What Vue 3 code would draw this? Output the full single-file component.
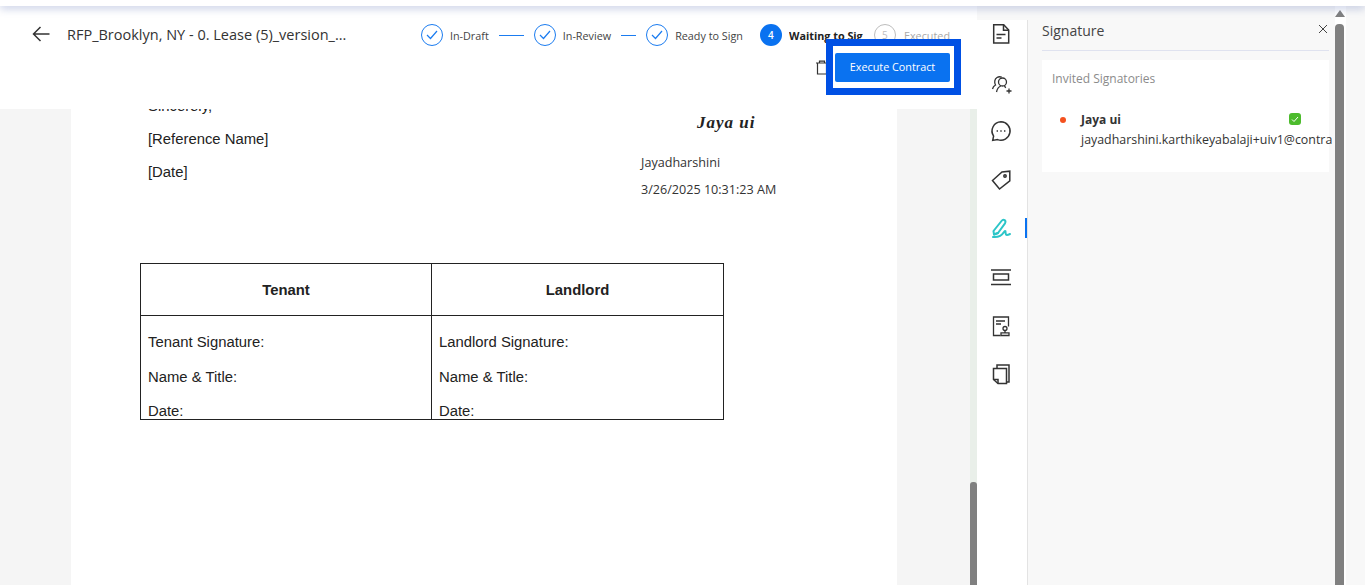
<script setup>
const steps = [
  { label: 'In-Draft', line: 25 },
  { label: 'In-Review', line: 15 },
  { label: 'Ready to Sign', line: 0 },
]
</script>

<template>
  <div class="page">
    <div class="strip"></div>
    <div class="body">
      <main class="main">
        <header class="head">
          <div class="row-top">
            <svg class="back" width="18" height="16" viewBox="0 0 18 16" fill="none" stroke="#333" stroke-width="1.5">
              <path d="M17.5 8H1.500M8.500 1 1.500 8l7 7" />
            </svg>
            <span class="title">RFP_Brooklyn, NY - 0. Lease (5)_version_...</span>
            <div class="stepper">
              <template v-for="s in steps" :key="s.label">
                <span class="circle done">
                  <svg width="12" height="10" viewBox="0 0 12 10" fill="none" stroke="#1b7cf0" stroke-width="1.2"><path d="M1 5l3.500 3.500L11 1" /></svg>
                </span>
                <span class="label">{{ s.label }}</span>
                <span v-if="s.line" class="line" :style="{ width: s.line + 'px' }"></span>
              </template>
              <span class="circle active">4</span>
              <span class="label bold">Waiting to Sign</span>
              <span class="circle todo">5</span>
              <span class="label muted">Executed</span>
            </div>
          </div>
          <div class="row-actions">
            <svg class="trash" width="14" height="15" viewBox="0 0 14 15" fill="none" stroke="#333" stroke-width="1.2">
              <path d="M1 3h12M4.500 3V1.200h5V3M2.500 3v11h9V3" />
            </svg>
            <div class="highlight">
              <button class="exec">Execute Contract</button>
            </div>
          </div>
        </header>
        <div class="viewer">
          <div class="doc">
            <div class="sign-block">
              <div class="sign-left">
                <p class="clip-line">Sincerely,</p>
                <p>[Reference Name]</p>
                <p>[Date]</p>
              </div>
              <div class="sign-right">
                <div class="script">Jaya ui</div>
                <div class="meta">Jayadharshini</div>
                <div class="meta">3/26/2025 10:31:23 AM</div>
              </div>
            </div>
            <div class="table">
              <div class="th">Tenant</div>
              <div class="th">Landlord</div>
              <div class="td">
                <p>Tenant Signature:</p>
                <p>Name &amp; Title:</p>
                <p>Date:</p>
              </div>
              <div class="td">
                <p>Landlord Signature:</p>
                <p>Name &amp; Title:</p>
                <p>Date:</p>
              </div>
            </div>
          </div>
          <div class="vbar"><div class="vthumb"></div></div>
        </div>
      </main>

      <aside class="rail">
        <svg class="ic" viewBox="0 0 24 24" fill="none" stroke="#333" stroke-width="1.5">
          <path d="M4.700 2.800h10l5 5.200v13H4.700z" /><path d="M14.500 2.800v5.400h5.200" /><path d="M7.500 12.500h9M7.500 16h5" />
        </svg>
        <svg class="ic" viewBox="0 0 24 24" fill="none" stroke="#333" stroke-width="1.3">
          <circle cx="13.500" cy="11" r="4" />
          <path d="M7.500 21c.6-3 2.300-5.300 4.300-6M15.500 14.800l1.200 2" />
          <path d="M3.500 18c.5-2.200 1.700-3.300 3-4-1.400-2.600-1-6 1.500-7.500 1.500-.9 3.300-.9 4.700-.3" />
          <path d="M17.500 20h5M20 17.500v5" />
        </svg>
        <svg class="ic" viewBox="0 0 24 24" fill="none" stroke="#333" stroke-width="1.5">
          <path d="M12 2.800a9.200 9.200 0 1 1-3.400 17.800l-4.900.8.900-4.300A9.200 9.200 0 0 1 12 2.800z" />
          <path d="M7.600 12h1.400M11.300 12h1.400M15 12h1.400" stroke-width="1.6" />
        </svg>
        <svg class="ic" viewBox="0 0 24 24" fill="none" stroke="#333" stroke-width="1.5">
          <path d="M3.500 12.500 13 4l7.800-.8v9.600L10.500 21z" /><circle cx="16" cy="8" r="1.200" />
        </svg>
        <svg class="ic" viewBox="0 0 24 24" fill="none" stroke="#2cc5c8" stroke-width="2" stroke-linecap="round" stroke-linejoin="round">
          <path d="M5 18.500 4.500 15 12.500 5c2-2.500 5-.4 3.500 2.300L9 17z" />
          <path d="M5 18.500l4-1.500M4 21c4.500.5 8.500-1 11-5 .8-1.200 1.500-1.500 1.500-.2 0 1.500 0 3.200 1.500 3.200 1 0 2-.5 3-1" />
        </svg>
        <svg class="ic" viewBox="0 0 24 24" fill="none" stroke="#333" stroke-width="1.5">
          <path d="M2 5h20M2 19.500h20" /><rect x="4.500" y="9" width="15" height="6" />
        </svg>
        <svg class="ic" viewBox="0 0 24 24" fill="none" stroke="#333" stroke-width="1.3">
          <path d="M11.500 21.500H4.500V3h15v9.500" /><path d="M7 7h9M7 10h5" />
          <circle cx="16" cy="14.500" r="2" /><path d="M16 16.500v2M12 18.800h8v2.700h-8z" />
        </svg>
        <svg class="ic" viewBox="0 0 24 24" fill="none" stroke="#333" stroke-width="1.5">
          <path d="M8 6V3h12v17h-2.500" />
          <path d="M4.500 6.500h13V21.500H9L4.500 17.500z" /><path d="M4.800 17.500H9V21.200" />
        </svg>
        <span class="rail-mark"></span>
      </aside>

      <section class="panel">
        <div class="panel-inner">
          <div class="panel-head">
            <span class="panel-title">Signature</span>
            <svg class="close" width="10" height="10" viewBox="0 0 10 10" stroke="#444" stroke-width="1"><path d="M1 1l8 8M9 1 1 9" /></svg>
          </div>
          <div class="card">
            <div class="card-title">Invited Signatories</div>
            <div class="person">
              <span class="dot"></span>
              <div class="who">
                <div class="name-row">
                  <span class="name">Jaya ui</span>
                  <span class="ok">
                    <svg width="8" height="7" viewBox="0 0 8 7" fill="none" stroke="#fff" stroke-width="1"><path d="M1 3.500 3 5.500 7 1" /></svg>
                  </span>
                </div>
                <div class="email">jayadharshini.karthikeyabalaji+uiv1@contractpodai.com</div>
              </div>
            </div>
          </div>
        </div>
        <div class="pbar">
          <span class="tri"></span>
          <span class="pthumb"></span>
        </div>
      </section>
    </div>
  </div>
</template>

<style scoped>
.page { width: 1365px; height: 585px; overflow: hidden; display: flex; flex-direction: column; background: #f8f8f8; font-family: "Open Sans", sans-serif; color: #333; }
.strip { height: 6px; background: #fff; position: relative; z-index: 3; box-shadow: 0 2px 9px rgba(70, 95, 170, .38); flex: none; }
.body { flex: 1; display: flex; min-height: 0; }
.main { width: 977px; display: flex; flex-direction: column; flex: none; }
.head { height: 103px; background: #fff; padding: 18px 16px 0 32px; box-sizing: border-box; flex: none; }
.row-top { display: flex; align-items: center; height: 22px; }
.back { flex: none; margin-bottom: 2px; }
.title { margin-left: 17px; margin-bottom: 2px; font-size: 14.5px; color: #333; white-space: nowrap; }
.stepper { margin-left: auto; margin-right: 11px; display: flex; align-items: center; height: 22px; }
.circle { width: 22px; height: 22px; border-radius: 50%; box-sizing: border-box; display: flex; align-items: center; justify-content: center; flex: none; font-size: 10px; }
.done { border: 1px solid #1b7cf0; }
.active { background: #0a72f0; color: #fff; font-weight: 600; margin-left: 17px; }
.todo { border: 1px solid #bdbdbd; color: #bdbdbd; margin-left: 11px; }
.label { margin-left: 7px; font-size: 10.8px; color: #444; white-space: nowrap; }
.label.bold { font-weight: 700; color: #222; width: 74px; overflow: hidden; flex: none; }
.label.muted { color: #aaa; margin-left: 8px; }
.line { height: 1px; background: #1b7cf0; margin: 0 10px; flex: none; }
.row-actions { display: flex; justify-content: flex-end; align-items: center; margin-top: -7px; }
.trash { margin-right: -3px; flex: none; }
.highlight { position: relative; border: 7px solid #0050e4; padding: 7px 4px 6px 2px; background: #fff; display: flex; }
.exec { width: 115px; height: 29px; border: 0; border-radius: 2px; background: #0a72f0; color: #fff; font: 10.8px "Open Sans", sans-serif; padding: 0 0 2px; }
.viewer { flex: 1; min-height: 0; display: flex; background: #f5f5f5; padding-left: 71px; }
.doc { width: 826px; background: #fff; overflow: hidden; flex: none; font-family: "Liberation Sans", sans-serif; font-size: 14.85px; color: #222; }
.doc p { margin: 0; }
.sign-block { display: flex; padding-left: 77px; height: 154px; }
.sign-left { width: 493px; margin-top: -19px; }
.sign-left p { height: 33px; line-height: 33px; }
.sign-right { font-family: "Open Sans", sans-serif; font-size: 12.6px; color: #333; }
.script { font: italic 700 17px "Liberation Serif", serif; margin: 2px 0 0 56px; height: 42px; line-height: 24px; letter-spacing: 1px; color: #222; white-space: nowrap; }
.meta { height: 27px; line-height: 20px; white-space: nowrap; }
.table { margin-left: 69px; width: 584px; height: 157px; box-sizing: border-box; border: 1px solid #222; display: grid; grid-template-columns: 291px 1fr; grid-template-rows: 52px 1fr; overflow: hidden; }
.th { font-weight: 700; display: flex; align-items: center; justify-content: center; border-bottom: 1px solid #222; }
.th:first-child, .td:nth-child(3) { border-right: 1px solid #222; }
.td { padding: 16px 7px 0; overflow: hidden; }
.td p { height: 34.5px; line-height: 20px; }
.vbar { width: 7px; margin-left: 73px; background: #e9efe9; display: flex; align-items: flex-end; flex: none; }
.vthumb { width: 7px; height: 103px; background: #808080; border-radius: 3px 3px 0 0; }
.rail { width: 51px; margin-top: 14px; background: #fff; border-right: 1px solid #e3e3e3; box-sizing: border-box; display: flex; flex-direction: column; align-items: center; gap: 24.6px; padding: 2px 2px 0 0; position: relative; flex: none; }
.ic { width: 24px; height: 24px; flex: none; }
.rail-mark { position: absolute; right: 0; top: 198px; width: 2px; height: 20px; background: #0a72f0; }
.panel { flex: 1; min-width: 0; display: flex; }
.panel-inner { width: 304px; padding-left: 14px; overflow: hidden; box-sizing: border-box; flex: none; }
.panel-head { width: 287px; height: 31px; margin-top: 14px; display: flex; align-items: center; justify-content: space-between; border-bottom: 1px solid #dfe2ef; padding-right: 1px; box-sizing: border-box; }
.panel-title { font-size: 14px; color: #444; position: relative; top: -5px; }
.close { position: relative; top: -6px; }
.card { width: 287px; height: 112px; margin-top: 9px; background: #fff; box-sizing: border-box; padding: 10px 0 0 10px; }
.card-title { font-size: 12px; color: #8b8b8b; }
.person { display: flex; margin-top: 23px; padding-left: 8px; }
.dot { width: 6px; height: 6px; margin-top: 7px; border-radius: 50%; background: #f4511e; flex: none; }
.who { margin-left: 15px; }
.name-row { display: flex; align-items: center; height: 18px; }
.name { font-size: 12px; font-weight: 700; color: #333; }
.ok { margin-left: 168px; width: 12px; height: 12px; border-radius: 3px; background: #4cbb2c; display: flex; align-items: center; justify-content: center; }
.email { font-size: 12.4px; color: #333; white-space: nowrap; margin-top: 3px; line-height: 18px; }
.pbar { width: 11px; background: #fff; flex: none; display: flex; flex-direction: column; align-items: flex-start; padding-top: 4px; margin-left: 3px; }
.tri { width: 0; height: 0; border-left: 5px solid transparent; border-right: 5px solid transparent; border-bottom: 7px solid #808080; }
.pthumb { width: 9px; flex: 1; margin-top: 7px; background: #808080; border-radius: 4px 4px 0 0; }
</style>
